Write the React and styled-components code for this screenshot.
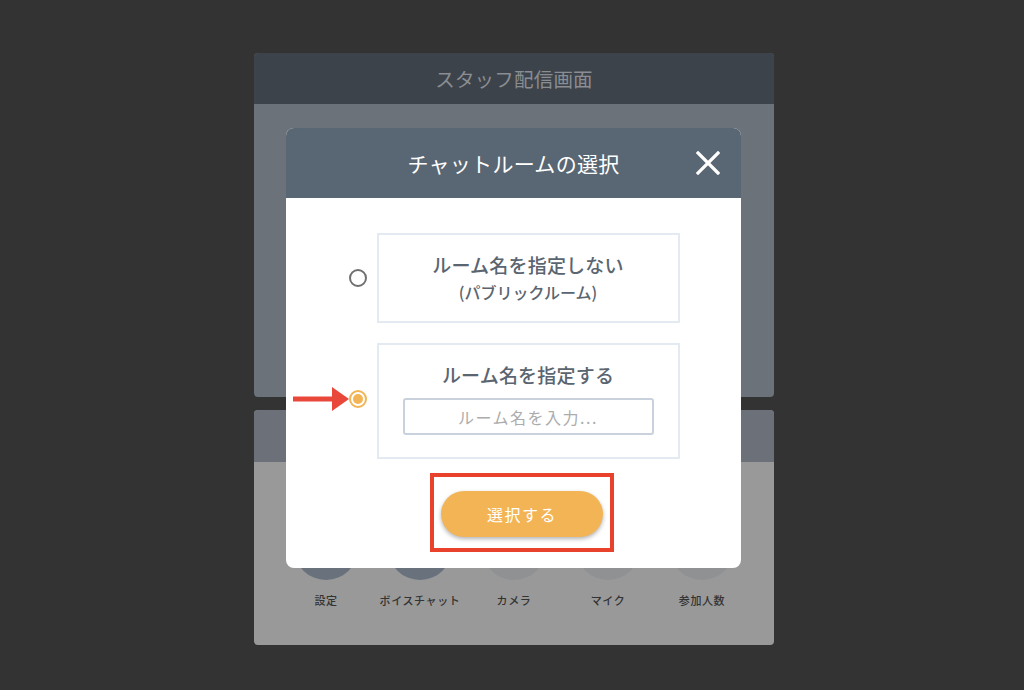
import React from "react";
import styled, { createGlobalStyle } from "styled-components";

const GlobalStyle = createGlobalStyle`
  html, body {
    margin: 0;
    padding: 0;
    background: #333333;
    font-family: "Noto Sans CJK JP", "Noto Sans", sans-serif;
  }
`;

const Page = styled.div`
  display: flex;
  justify-content: center;
  padding: 53px 0 0 4px;
  min-height: 690px;
  box-sizing: border-box;
`;

const Stage = styled.div`
  position: relative;
  width: 520px;
  display: flex;
  flex-direction: column;
  gap: 13px;
`;

const TopPanel = styled.section`
  height: 344px;
  border-radius: 4px;
  overflow: hidden;
  background: #6b7279;
  display: flex;
  flex-direction: column;
`;

const TopHeader = styled.header`
  height: 51px;
  background: #3d434b;
  display: flex;
  align-items: center;
  justify-content: center;
  color: #8a8d92;
  font-size: 19.5px;
  letter-spacing: 0.2px;
`;

const BottomPanel = styled.section`
  height: 235px;
  border-radius: 4px;
  overflow: hidden;
  background: #999999;
  display: flex;
  flex-direction: column;
`;

const BottomHeader = styled.div`
  height: 52px;
  background: #6b7079;
`;

const IconRow = styled.div`
  display: grid;
  grid-template-columns: repeat(5, 1fr);
  padding: 54px 25px 0;
`;

const IconCell = styled.div`
  display: flex;
  flex-direction: column;
  align-items: center;
  gap: 12px;
`;

const Circle = styled.div`
  width: 64px;
  height: 64px;
  border-radius: 50%;
  background: ${(p) => (p.$tone === "blue" ? "#69727c" : "#8f9193")};
`;

const IconLabel = styled.span`
  font-size: 11px;
  line-height: 16px;
  font-weight: 500;
  color: #333333;
  letter-spacing: 0.6px;
`;

const Modal = styled.div`
  position: absolute;
  left: 32px;
  top: 75px;
  width: 455px;
  height: 440px;
  border-radius: 8px;
  overflow: hidden;
  background: #ffffff;
  display: flex;
  flex-direction: column;
`;

const ModalHeader = styled.div`
  height: 70px;
  flex: none;
  background: #596673;
  display: grid;
  grid-template-columns: 1fr auto 1fr;
  align-items: center;
`;

const ModalTitle = styled.h2`
  grid-column: 2;
  margin: 0;
  color: #ffffff;
  font-size: 21px;
  font-weight: 400;
  letter-spacing: 0.3px;
`;

const CloseButton = styled.button`
  grid-column: 3;
  justify-self: end;
  margin-right: 21px;
  width: 24px;
  height: 24px;
  padding: 0;
  border: none;
  background: transparent;
  display: flex;
  align-items: center;
  justify-content: center;
`;

const ModalBody = styled.div`
  display: flex;
  flex-direction: column;
  align-items: center;
  padding: 35px 0 16px;
  gap: 20px;
`;

const OptionRow = styled.div`
  position: relative;
  display: flex;
  align-items: center;
  gap: 10px;
  margin-left: 1px;
`;

const Radio = styled.span`
  width: 18px;
  height: 18px;
  box-sizing: border-box;
  border-radius: 50%;
  border: 2px solid ${(p) => (p.$checked ? "#f3b455" : "#707070")};
  margin-top: ${(p) => (p.$checked ? "-4px" : "0")};
  display: flex;
  align-items: center;
  justify-content: center;
  &::after {
    content: "";
    display: ${(p) => (p.$checked ? "block" : "none")};
    width: 10px;
    height: 10px;
    border-radius: 50%;
    background: #f3b455;
  }
`;

const OptionBox = styled.div`
  width: 303px;
  height: ${(p) => p.$h}px;
  box-sizing: border-box;
  border: 2px solid #e3eaf2;
  display: flex;
  flex-direction: column;
  align-items: center;
  justify-content: ${(p) => (p.$top ? "flex-start" : "center")};
  padding-top: ${(p) => p.$top || 0}px;
  gap: ${(p) => p.$gap || 0}px;
`;

const OptionTitle = styled.div`
  font-size: 19px;
  line-height: 24px;
  font-weight: 500;
  color: #5a6570;
  letter-spacing: 0.2px;
`;

const OptionSub = styled.div`
  font-size: 16px;
  line-height: 24px;
  font-weight: 500;
  color: #5a6570;
  margin-top: 3px;
`;

const NameInput = styled.input`
  width: 251px;
  height: 37px;
  box-sizing: border-box;
  border: 2px solid #c9d2dc;
  border-radius: 3px;
  outline: none;
  text-align: center;
  font-family: inherit;
  font-size: 16px;
  letter-spacing: 1.5px;
  color: #555;
  &::placeholder {
    color: #acacac;
  }
`;

const Arrow = styled.svg`
  position: absolute;
  left: -56px;
  top: 50%;
  margin-top: -14px;
`;

const Highlight = styled.div`
  margin-top: -6px;
  margin-left: 17px;
  width: 184px;
  height: 79px;
  box-sizing: border-box;
  border: 4px solid #e8412c;
  padding: 14px 7px 11px;
  display: flex;
  justify-content: center;
`;

const SubmitButton = styled.button`
  width: 162px;
  height: 46px;
  border: none;
  border-radius: 23px;
  background: #f3b455;
  color: #ffffff;
  font-family: inherit;
  font-size: 16px;
  letter-spacing: 1.5px;
  box-shadow: 0 2px 4px rgba(0, 0, 0, 0.3);
`;

const tools = [
  { label: "設定", tone: "blue" },
  { label: "ボイスチャット", tone: "blue" },
  { label: "カメラ", tone: "gray" },
  { label: "マイク", tone: "gray" },
  { label: "参加人数", tone: "gray" },
];

export default function App() {
  return (
    <>
      <GlobalStyle />
      <Page>
        <Stage>
          <TopPanel>
            <TopHeader>スタッフ配信画面</TopHeader>
          </TopPanel>
          <BottomPanel>
            <BottomHeader />
            <IconRow>
              {tools.map((t) => (
                <IconCell key={t.label}>
                  <Circle $tone={t.tone} />
                  <IconLabel>{t.label}</IconLabel>
                </IconCell>
              ))}
            </IconRow>
          </BottomPanel>

          <Modal>
            <ModalHeader>
              <ModalTitle>チャットルームの選択</ModalTitle>
              <CloseButton aria-label="close">
                <svg width="24" height="24" viewBox="0 0 24 24">
                  <path
                    d="M2 2 L22 22 M22 2 L2 22"
                    stroke="#ffffff"
                    strokeWidth="3.2"
                    strokeLinecap="square"
                    fill="none"
                  />
                </svg>
              </CloseButton>
            </ModalHeader>
            <ModalBody>
              <OptionRow>
                <Radio />
                <OptionBox $h={90}>
                  <OptionTitle>ルーム名を指定しない</OptionTitle>
                  <OptionSub>(パブリックルーム)</OptionSub>
                </OptionBox>
              </OptionRow>
              <OptionRow>
                <Arrow width="56" height="24" viewBox="0 0 56 24">
                  <rect x="0" y="9.5" width="41" height="5" fill="#e9473a" />
                  <polygon points="39,0 56,12 39,24" fill="#e9473a" />
                </Arrow>
                <Radio $checked />
                <OptionBox $h={116} $top={18} $gap={11}>
                  <OptionTitle>ルーム名を指定する</OptionTitle>
                  <NameInput placeholder="ルーム名を入力..." />
                </OptionBox>
              </OptionRow>
              <Highlight>
                <SubmitButton>選択する</SubmitButton>
              </Highlight>
            </ModalBody>
          </Modal>
        </Stage>
      </Page>
    </>
  );
}
